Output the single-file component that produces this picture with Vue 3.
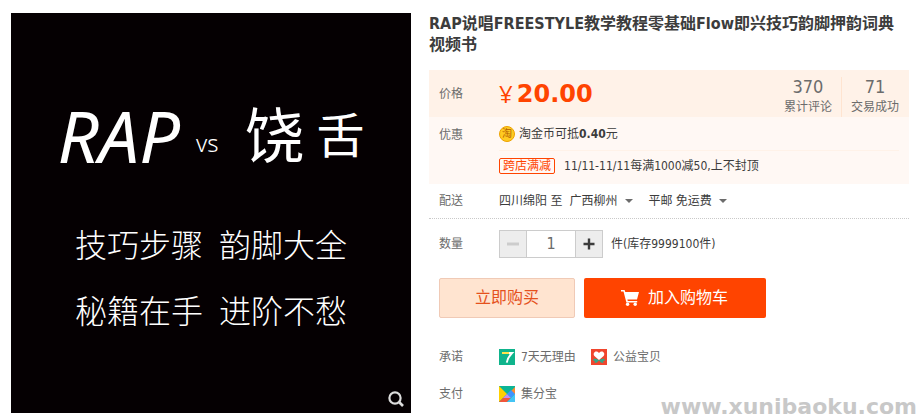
<template>
  <main class="product">
    <div class="cover">
      <div class="cover-title">
        <span class="cover-rap">RAP</span>
        <span class="cover-vs">vs</span>
        <span class="cover-cn">饶</span>
        <span class="cover-cn small">舌</span>
      </div>
      <div v-for="(line, index) in coverLines" :key="index" class="cover-line">
        <span v-for="part in line" :key="part">{{ part }}</span>
      </div>
      <button type="button" class="zoom-btn" aria-label="放大图片">
        <svg viewBox="0 0 16 16" width="16" height="16">
          <circle cx="7" cy="7" r="5.6" fill="none" stroke="#dcdcdc" stroke-width="2.2" />
          <path d="M11 11l4 4" stroke="#dcdcdc" stroke-width="2.6" />
        </svg>
      </button>
    </div>

    <section class="info">
      <h1>RAP说唱FREESTYLE教学教程零基础Flow即兴技巧韵脚押韵词典视频书</h1>

      <div class="row price-row">
        <span class="label">价格</span>
        <div class="price"><span class="yen">¥</span><strong>20.00</strong></div>
        <div class="stats">
          <a v-for="stat in stats" :key="stat.name" href="#" class="stat">
            <span class="stat-num">{{ stat.value }}</span>
            <span>{{ stat.name }}</span>
          </a>
        </div>
      </div>

      <div class="row promo-row">
        <span class="label">优惠</span>
        <div class="promos">
          <div class="promo coin">
            <span class="coin-icon">淘</span>
            <span>淘金币可抵<b>0.40</b>元</span>
          </div>
          <div class="promo">
            <span class="tag">跨店满减</span>
            <span>11/11-11/11每满1000减50,上不封顶</span>
          </div>
        </div>
      </div>

      <div class="row delivery-row">
        <span class="label">配送</span>
        <span class="from">四川绵阳 至</span>
        <span class="dropdown">
          <select v-model="city" aria-label="收货地">
            <option>广西柳州</option>
          </select>
        </span>
        <span class="dropdown">
          <select v-model="shipping" aria-label="运费">
            <option>平邮 免运费</option>
          </select>
        </span>
      </div>

      <div class="row amount-row">
        <label class="label" for="amount">数量</label>
        <div class="stepper">
          <button type="button" aria-label="减少" :disabled="amount <= 1" @click="amount--">
            <svg viewBox="0 0 12 12" width="12" height="12">
              <path d="M0 6h12" stroke="#ccc" stroke-width="3" />
            </svg>
          </button>
          <input id="amount" v-model.number="amount" type="text" />
          <button type="button" aria-label="增加" @click="amount++">
            <svg viewBox="0 0 12 12" width="12" height="12">
              <path d="M0.500 6h11M6 0.500v11" stroke="#3c3c3c" stroke-width="2.4" />
            </svg>
          </button>
        </div>
        <span>件(库存9999100件)</span>
      </div>

      <div class="actions">
        <button type="button" class="buy-btn">立即购买</button>
        <button type="button" class="cart-btn">
          <svg viewBox="0 0 18 16" width="18" height="16">
            <path d="M0 0h3.600l.7 2H18l-2 7.400H6.400l.4 1.600h9.400v1.600H5.400L2.500 1.600H0z" fill="#fff" />
            <circle cx="6.600" cy="14.300" r="1.700" fill="#fff" />
            <circle cx="14.200" cy="14.300" r="1.700" fill="#fff" />
          </svg>
          加入购物车
        </button>
      </div>

      <div class="row service-row">
        <span class="label">承诺</span>
        <a href="#" class="service">
          <svg viewBox="0 0 16 16" width="16" height="16">
            <rect width="16" height="16" fill="#0fb48c" />
            <path d="M3 4h7.500" stroke="#ffe34d" stroke-width="2" />
            <path d="M10 4h3C10.400 6.600 8.600 9.400 7.800 13.600" fill="none" stroke="#fff" stroke-width="2" />
          </svg>
          7天无理由
        </a>
        <a href="#" class="service">
          <svg viewBox="0 0 16 16" width="16" height="16">
            <rect width="16" height="16" fill="#f0452d" />
            <path d="M3 9.500l3 .5 2 1.200 2-1.200 3-.5 1 2-2 .8.600 1.700-2.600-.4-2-2-2 2-2.600.4.600-1.700-2-.8z" fill="#35a688" />
            <path d="M8 11L3.400 7C1.800 4.900 3.200 2.400 5.200 2.400c1.300 0 2.200.7 2.800 1.600.6-.9 1.500-1.600 2.800-1.600 2 0 3.400 2.500 1.800 4.600z" fill="#fff" />
          </svg>
          公益宝贝
        </a>
      </div>

      <div class="row service-row">
        <span class="label">支付</span>
        <a href="#" class="service">
          <svg viewBox="0 0 16 16" width="16" height="16">
            <rect width="16" height="16" fill="#0bb596" />
            <path d="M0 0l8 8-8 8z" fill="#ffd000" />
            <path d="M16 1v8l-4-4z" fill="#ff8a2b" />
            <path d="M12 4l4 4-4 4-4-4z" fill="#3f93ff" />
            <path d="M8 8l4 4H4z" fill="#c78af0" />
            <path d="M4 12h8l-4 4H0z" fill="#f0563c" />
            <path d="M16 8v8H8z" fill="#44c4f4" />
          </svg>
          集分宝
        </a>
      </div>
    </section>

    <div class="watermark">www.xunibaoku.com</div>
  </main>
</template>

<script setup>
import { ref } from 'vue'

const coverLines = [
  ['技巧步骤', '韵脚大全'],
  ['秘籍在手', '进阶不愁']
]

const stats = [
  { value: 370, name: '累计评论' },
  { value: 71, name: '交易成功' }
]

const city = ref('广西柳州')
const shipping = ref('平邮 免运费')
const amount = ref(1)
</script>

<style>
body {
  background: #fff;
}
</style>

<style scoped>
.product {
  position: relative;
  display: grid;
  grid-template-columns: 5fr 6fr;
  align-items: start;
  gap: 18px;
  padding: 13px 10px 7px 11px;
  font-family: "DejaVu Sans Condensed", "Noto Sans CJK SC", sans-serif;
  font-size: 12px;
  line-height: 20px;
  color: #3c3c3c;
}

button,
input,
select {
  margin: 0;
  padding: 0;
  border: 0;
  border-radius: 0;
  font: inherit;
  color: inherit;
}

button {
  cursor: pointer;
}

a {
  color: inherit;
  text-decoration: none;
}

svg {
  display: block;
  flex: none;
}

.cover {
  position: relative;
  box-sizing: border-box;
  aspect-ratio: 1;
  display: flex;
  flex-direction: column;
  align-items: center;
  padding-top: 78px;
  background: #050002;
  color: #fff;
  font-family: "Noto Sans", "Noto Sans CJK SC", sans-serif;
  font-weight: 300;
}

.cover-title {
  display: flex;
  align-items: center;
  height: 88px;
  margin-bottom: 48px;
}

.cover-rap {
  font-family: "Liberation Sans Narrow", "Noto Sans", sans-serif;
  font-size: 72px;
  font-style: italic;
  font-weight: 400;
}

.cover-vs {
  margin: 16px 26px 0 16px;
  font-size: 24px;
}

.cover-cn {
  margin-right: 12px;
  font-size: 60px;
  font-weight: 400;
}

.cover-cn.small {
  margin-right: 0;
  font-size: 48px;
}

.cover-line {
  display: flex;
  gap: 16px;
  font-size: 32px;
  line-height: 36px;
  margin-bottom: 30px;
}

.zoom-btn {
  position: absolute;
  right: 7px;
  bottom: 6px;
  background: none;
}

h1 {
  margin: 0 0 15px;
  font-size: 16px;
  line-height: 21px;
  font-weight: 700;
}

.row {
  display: flex;
  align-items: center;
  padding: 0 10px;
}

.label {
  flex: 0 0 60px;
  color: #6c6c6c;
}

.price-row {
  height: 47px;
  background: #fff2e8;
}

.price {
  display: flex;
  align-items: center;
  gap: 4px;
  color: #ff4400;
  font-family: "DejaVu Sans", sans-serif;
  font-size: 24px;
}

.yen {
  font-family: "Open Sans", sans-serif;
}

.stats {
  display: flex;
  margin-left: auto;
  padding-top: 6px;
}

.stat {
  display: flex;
  flex-direction: column;
  align-items: center;
  color: #6c6c6c;
}

.stat + .stat {
  margin-left: 9px;
  padding-left: 9px;
  border-left: 1px solid #ffe4d0;
}

.stat-num {
  font-size: 18px;
}

.promo-row {
  align-items: flex-start;
  padding-bottom: 3px;
  background: #fff8f4;
}

.promo-row .label {
  padding-top: 8px;
}

.promos {
  flex: 1;
}

.promo {
  display: flex;
  align-items: center;
  gap: 9px;
  height: 30px;
}

.coin {
  gap: 4px;
  height: 32px;
  padding-top: 1px;
  border-bottom: 1px solid #fff2e8;
}

.coin-icon {
  width: 14px;
  height: 14px;
  border: 1px solid #eda200;
  border-radius: 50%;
  background: #ffcb22;
  color: #b35c00;
  font-size: 10px;
  line-height: 14px;
  text-align: center;
}

.tag {
  padding: 0 3px;
  border: 1px solid #ff4400;
  border-radius: 2px;
  color: #ff4400;
  line-height: 14px;
}

.delivery-row {
  height: 34px;
  border-bottom: 1px dotted #c9c9c9;
}

.from {
  margin-right: 7px;
}

.dropdown {
  display: flex;
  align-items: center;
  margin-right: 15px;
}

.dropdown::after {
  content: "";
  margin-left: 7px;
  border: 4px solid transparent;
  border-top-color: #6c6c6c;
  border-bottom: 0;
  pointer-events: none;
}

select {
  appearance: none;
  background: none;
}

.amount-row {
  padding-top: 11px;
}

.stepper {
  display: flex;
  margin-right: 8px;
  border: 1px solid #ccc;
}

.stepper button {
  display: flex;
  align-items: center;
  justify-content: center;
  width: 26px;
  height: 26px;
  background: #ededed;
}

.stepper input {
  width: 48px;
  border: solid #ccc;
  border-width: 0 1px;
  color: #6c6c6c;
  font-size: 16px;
  text-align: center;
}

.actions {
  display: flex;
  gap: 9px;
  padding: 20px 10px 29px;
}

.actions button {
  display: flex;
  align-items: center;
  justify-content: center;
  height: 40px;
  border-radius: 2px;
  font-size: 16px;
}

.actions .buy-btn {
  padding: 0 35px;
  border: 1px solid #f0cab6;
  background: #ffe4d0;
  color: #e5511d;
}

.actions .cart-btn {
  gap: 9px;
  padding: 0 38px 0 37px;
  background: #ff4400;
  color: #fff;
}

.service-row {
  margin-bottom: 17px;
  color: #6c6c6c;
}

.service-row:last-child {
  margin-bottom: 0;
}

.service {
  display: flex;
  align-items: center;
  gap: 6px;
  margin-right: 15px;
}

.watermark {
  position: absolute;
  right: 2px;
  bottom: 0;
  color: #c8c8c8;
  font-family: "DejaVu Sans", sans-serif;
  font-size: 22px;
  line-height: 26px;
  font-weight: 700;
}
</style>
